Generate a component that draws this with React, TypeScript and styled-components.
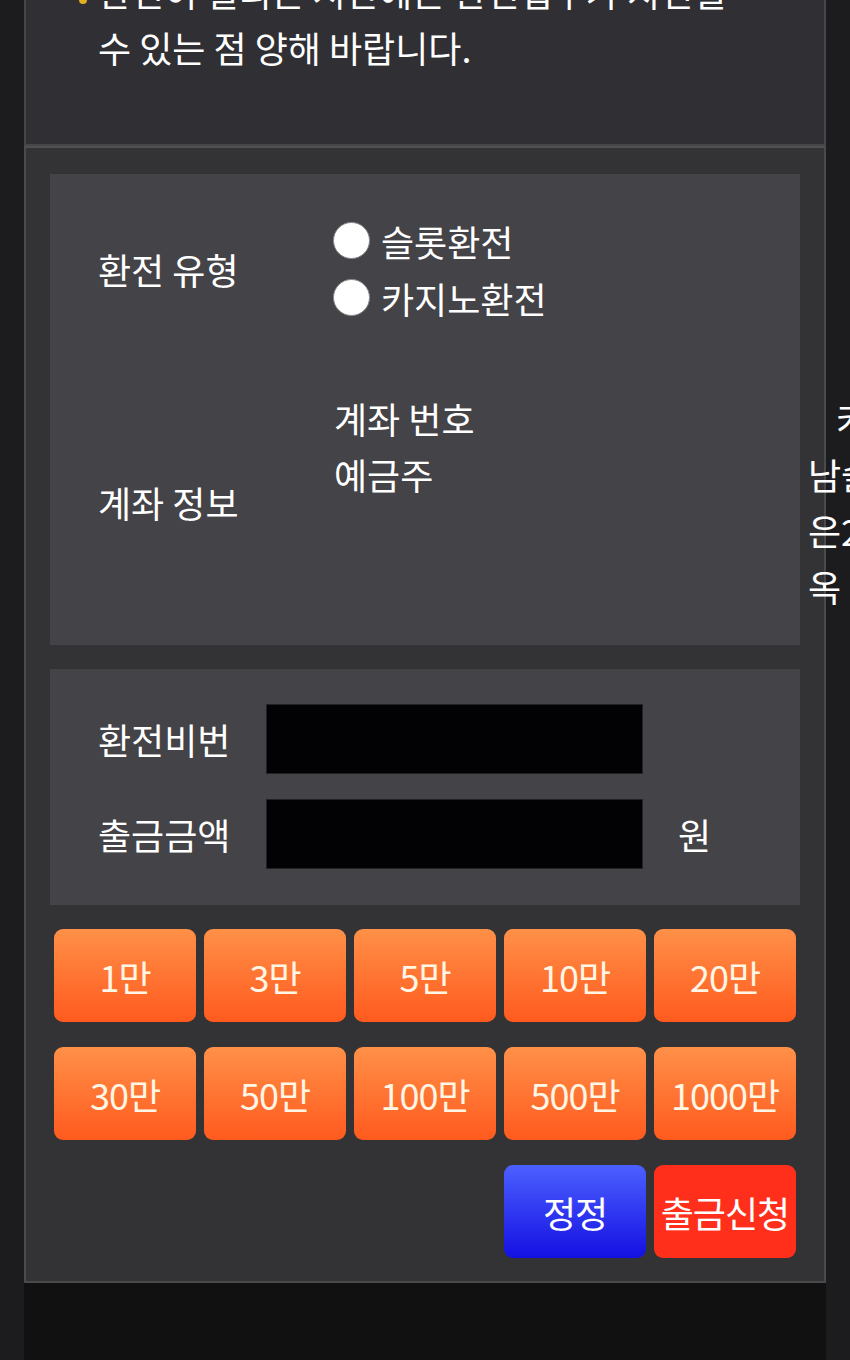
import React from "react";
import styled, { createGlobalStyle } from "styled-components";

const GlobalStyle = createGlobalStyle`
  html, body {
    margin: 0;
    padding: 0;
    height: 100%;
    overflow: hidden;
    background: #1c1c1e;
  }
  body {
    font-family: "Noto Sans CJK KR", "Noto Sans", sans-serif;
    color: #ffffff;
  }
`;

const Page = styled.div`
  width: 802px;
  margin: -82px 0 0 24px;
`;

const NoticeBox = styled.div`
  background: #303034;
  border: 2px solid #464648;
  padding: 43px 40px 69px 72px;
`;

const NoticeList = styled.ul`
  margin: 0;
  padding: 0;
  list-style: none;
`;

const NoticeItem = styled.li`
  position: relative;
  font-size: 36px;
  line-height: 56px;
  color: #ffffff;
  white-space: nowrap;

  &::before {
    content: "";
    position: absolute;
    left: -19px;
    top: 33px;
    width: 8px;
    height: 8px;
    border-radius: 50%;
    background: #e0b020;
  }
`;

const FormBox = styled.div`
  background: #333335;
  border: 2px solid #4a4a4c;
  border-top-color: #505052;
  padding: 26px 24px 23px 24px;
  display: flex;
  flex-direction: column;
  gap: 24px;
`;

const InfoPanel = styled.div`
  background: #444347;
  padding: 38px 0 31px 48px;
  display: flex;
  flex-direction: column;
  gap: 64px;
`;

const InfoRow = styled.div`
  display: grid;
  grid-template-columns: 236px 474px 120px;
  align-items: center;
  font-size: 36px;
  line-height: 56px;
`;

const RowLabel = styled.div`
  white-space: nowrap;
`;

const RadioGroup = styled.div`
  display: flex;
  flex-direction: column;
  margin-left: -1px;
`;

const RadioLabel = styled.label`
  display: flex;
  align-items: center;
  gap: 11px;
  height: 57px;
`;

const Radio = styled.input`
  appearance: none;
  margin: 0;
  width: 37px;
  height: 37px;
  border-radius: 50%;
  background: #ffffff;
  border: 1px solid #8a8a8a;
  box-sizing: border-box;
`;

const ValueStack = styled.div`
  display: flex;
  flex-direction: column;
  align-self: start;
`;

const OverflowCell = styled.div`
  white-space: nowrap;
  text-indent: 28px;
`;

const AmountPanel = styled.div`
  background: #444347;
  padding: 35px 0 36px 48px;
  display: flex;
  flex-direction: column;
  gap: 25px;
`;

const AmountRow = styled.div`
  display: grid;
  grid-template-columns: 168px 377px auto;
  align-items: center;
  font-size: 36px;
`;

const Unit = styled.span`
  margin-left: 35px;
`;

const BlackInput = styled.input`
  box-sizing: border-box;
  width: 377px;
  height: 70px;
  margin: 0;
  background: #020204;
  border: 1px solid #222;
  outline: none;
  color: #fff;
`;

const ButtonGrid = styled.div`
  display: grid;
  grid-template-columns: repeat(5, 142px);
  column-gap: 8px;
  row-gap: 25px;
  margin: 0 4px;
`;

type Tone = "orange" | "blue" | "red";

const backgrounds: Record<Tone, string> = {
  orange: "linear-gradient(to bottom, #ff9048, #ff5a1e)",
  blue: "linear-gradient(to bottom, #4c60ff, #1410e2)",
  red: "#ff2f1c",
};

const AmountButton = styled.button<{ $tone: Tone; $col?: number }>`
  grid-column: ${({ $col }) => ($col ? `${$col} / span 1` : "auto")};
  height: 93px;
  border: none;
  border-radius: 9px;
  background: ${({ $tone }) => backgrounds[$tone]};
  color: ${({ $tone }) => ($tone === "orange" ? "#fff6e6" : "#ffffff")};
  font-family: "Noto Sans CJK KR", "Noto Sans", sans-serif;
  font-size: 36px;
  letter-spacing: -1px;
  padding: 0;
  white-space: nowrap;
  cursor: pointer;
`;

const Footer = styled.div`
  height: 120px;
  background: #111112;
`;

const amounts = ["1만", "3만", "5만", "10만", "20만", "30만", "50만", "100만", "500만", "1000만"];

export default function App() {
  return (
    <>
      <GlobalStyle />
      <Page>
        <NoticeBox>
          <NoticeList>
            <NoticeItem>
              환전이 밀리는 시간에는 환전업무가 지연될
              <br />수 있는 점 양해 바랍니다.
            </NoticeItem>
          </NoticeList>
        </NoticeBox>
        <FormBox>
          <InfoPanel>
            <InfoRow>
              <RowLabel>환전 유형</RowLabel>
              <RadioGroup>
                <RadioLabel>
                  <Radio type="radio" name="kind" />
                  슬롯환전
                </RadioLabel>
                <RadioLabel>
                  <Radio type="radio" name="kind" />
                  카지노환전
                </RadioLabel>
              </RadioGroup>
            </InfoRow>
            <InfoRow>
              <RowLabel>계좌 정보</RowLabel>
              <ValueStack>
                <span>계좌 번호</span>
                <span>예금주</span>
              </ValueStack>
              <OverflowCell>
                카카오
                <br />남슬기
                <br />은2580
                <br />옥
              </OverflowCell>
            </InfoRow>
          </InfoPanel>
          <AmountPanel>
            <AmountRow>
              <RowLabel>환전비번</RowLabel>
              <BlackInput type="password" />
            </AmountRow>
            <AmountRow>
              <RowLabel>출금금액</RowLabel>
              <BlackInput type="text" />
              <Unit>원</Unit>
            </AmountRow>
          </AmountPanel>
          <ButtonGrid>
            {amounts.map((a) => (
              <AmountButton key={a} $tone="orange">
                {a}
              </AmountButton>
            ))}
            <AmountButton $tone="blue" $col={4}>
              정정
            </AmountButton>
            <AmountButton $tone="red" $col={5}>
              출금신청
            </AmountButton>
          </ButtonGrid>
        </FormBox>
        <Footer />
      </Page>
    </>
  );
}
